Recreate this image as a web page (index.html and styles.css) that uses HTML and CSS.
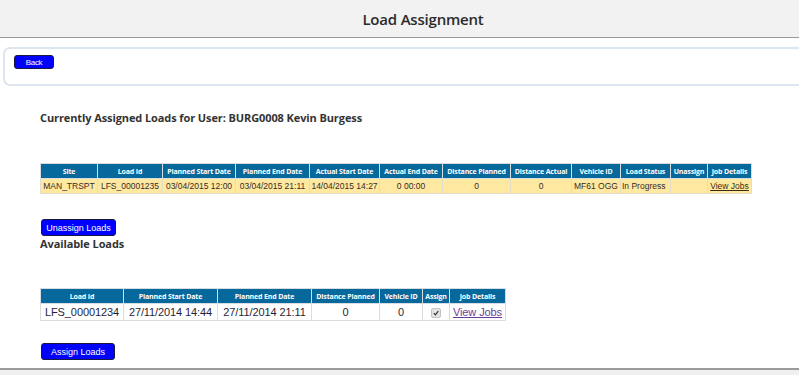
FILE: index.html
```html
<!DOCTYPE html>
<html>
<head>
<meta charset="utf-8">
<link rel="stylesheet" href="styles.css">
</head>
<body>
<header class="topbar"><h1 class="title">Load Assignment</h1></header>
<div class="panel"><button class="btn btn-back">Back</button></div>
<main class="content">
  <h2 class="heading heading-first">Currently Assigned Loads for User: BURG0008 Kevin Burgess</h2>
  <table class="grid grid-assigned">
    <colgroup>
      <col style="width:57px"><col style="width:65px"><col style="width:73px"><col style="width:74px"><col style="width:70px"><col style="width:63px"><col style="width:68px"><col style="width:61px"><col style="width:49px"><col style="width:50px"><col style="width:37px"><col style="width:44px">
    </colgroup>
    <thead>
      <tr><th>Site</th><th>Load Id</th><th>Planned Start Date</th><th>Planned End Date</th><th>Actual Start Date</th><th>Actual End Date</th><th>Distance Planned</th><th>Distance Actual</th><th>Vehicle ID</th><th>Load Status</th><th>Unassign</th><th>Job Details</th></tr>
    </thead>
    <tbody>
      <tr><td>MAN_TRSPT</td><td>LFS_00001235</td><td>03/04/2015 12:00</td><td>03/04/2015 21:11</td><td>14/04/2015 14:27</td><td class="c">0 00:00</td><td class="c">0</td><td class="c">0</td><td>MF61 OGG</td><td class="l">In Progress</td><td></td><td><a class="joblink dark" href="#">View Jobs</a></td></tr>
    </tbody>
  </table>
  <button class="btn btn-unassign">Unassign Loads</button>
  <h2 class="heading heading-second">Available Loads</h2>
  <table class="grid grid-available">
    <colgroup>
      <col style="width:83px"><col style="width:94px"><col style="width:94px"><col style="width:68px"><col style="width:43px"><col style="width:27px"><col style="width:56px">
    </colgroup>
    <thead>
      <tr><th>Load Id</th><th>Planned Start Date</th><th>Planned End Date</th><th>Distance Planned</th><th>Vehicle ID</th><th>Assign</th><th>Job Details</th></tr>
    </thead>
    <tbody>
      <tr><td>LFS_00001234</td><td>27/11/2014 14:44</td><td>27/11/2014 21:11</td><td>0</td><td>0</td><td><span class="chk"><svg width="6" height="6" viewBox="0 0 6 6"><path d="M0.8 3.2 L2.4 4.8 L5.3 1.2" fill="none" stroke="#333" stroke-width="1.2"/></svg></span></td><td><a class="joblink" href="#">View Jobs</a></td></tr>
    </tbody>
  </table>
  <button class="btn btn-assign">Assign Loads</button>
</main>
<footer class="footer"></footer>
</body>
</html>
```

FILE: styles.css
```css
html, body {
  margin: 0;
  padding: 0;
  background: #ffffff;
  font-family: "Liberation Sans", Arial, sans-serif;
  color: #333333;
  overflow: hidden;
}

.topbar {
  height: 37px;
  background: #f2f2f2;
  border-bottom: 1px solid #9a9a9a;
  box-sizing: content-box;
  display: flex;
  align-items: center;
  justify-content: center;
  padding-left: 47px;
}

.title {
  margin: 0;
  font-family: "Open Sans", sans-serif;
  font-weight: 600;
  font-size: 15px;
  color: #2b2b2b;
  letter-spacing: -0.2px;
}

.panel {
  margin: 9px -10px 0 3px;
  border: 2px solid #dde6f0;
  border-radius: 7px;
  height: 29px;
  box-sizing: content-box;
  padding: 6px 10px 0 9px;
}

.btn {
  display: block;
  background: #0000ff;
  color: #ffffff;
  border: 1px solid #1a1a40;
  border-radius: 3px;
  font-family: "Liberation Sans", Arial, sans-serif;
  font-size: 9px;
  padding: 0;
  margin: 0;
  cursor: pointer;
}

.btn-back {
  width: 40px;
  height: 14px;
  font-size: 8px;
  letter-spacing: -0.3px;
}

.content {
  padding-left: 40px;
}

.heading {
  margin: 0;
  font-family: "Open Sans", sans-serif;
  font-weight: 700;
  font-size: 11px;
  color: #333333;
  line-height: 15px;
  letter-spacing: -0.1px;
}

.heading-first {
  margin-top: 24px;
}

.grid {
  border-collapse: collapse;
  table-layout: fixed;
}

.grid-assigned {
  margin-top: 38px;
}

.grid th {
  background: #07689b;
  color: #ffffff;
  font-family: "Open Sans", sans-serif;
  font-weight: 700;
  font-size: 7px;
  letter-spacing: -0.15px;
  height: 14px;
  padding: 0;
  border: 1px solid #d8dde3;
  text-align: center;
  white-space: nowrap;
  overflow: hidden;
}

.grid td {
  padding: 0 1px;
  white-space: nowrap;
  overflow: hidden;
  text-align: center;
}

.grid-assigned td {
  background: #ffe9a0;
  border: 1px solid #e2dcc8;
  font-size: 8.5px;
  height: 14px;
  color: #3a2a2a;
}

.grid-assigned td.l {
  text-align: left;
}

.grid-available {
  margin-top: 37px;
}

.grid-available th {
  height: 14px;
}

.grid-available td {
  border: 1px solid #dcdcdc;
  font-size: 11px;
  height: 16px;
  color: #1f1f3a;
  letter-spacing: -0.1px;
}

.joblink {
  color: #6a3d9a;
  text-decoration: underline;
}

.joblink.dark {
  color: #3a2a10;
}

.chk {
  display: inline-flex;
  align-items: center;
  justify-content: center;
  width: 8px;
  height: 8px;
  border-radius: 2px;
  background: #e4e4e4;
  border: 1px solid #c4c4c4;
  vertical-align: middle;
}

.btn-unassign {
  margin: 25px 0 0 1px;
  width: 75px;
  height: 17px;
}

.btn-assign {
  margin: 22px 0 0 1px;
  width: 74px;
  height: 17px;
}

.footer {
  position: absolute;
  left: 0;
  right: 0;
  top: 368px;
  height: 20px;
  background: #f0f0f0;
  border-top: 2px solid #9a9a9a;
}
```
